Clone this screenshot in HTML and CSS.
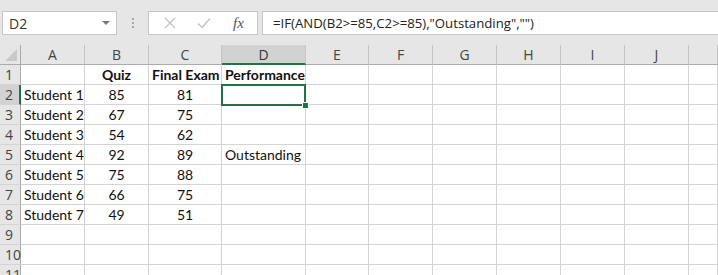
FILE: index.html
```html
<!DOCTYPE html>
<html lang="en">
<head>
    <meta charset="UTF-8">
    <title>Performance</title>
    <link rel="stylesheet" href="styles.css">
</head>
<body>
    <div class="topbar">
        <div class="namebox">
            <span>D2</span>
            <svg class="arrow" width="8" height="5" viewBox="0 0 8 5"><path d="M0 0 L8 0 L4 4 Z" fill="#7a7a7a"/></svg>
        </div>
        <div class="grip"><i></i><i></i><i></i></div>
        <div class="fbuttons">
            <svg width="12" height="12" viewBox="0 0 12 12"><path d="M1 1 L11 11 M11 1 L1 11" stroke="#c4c4c4" stroke-width="1.4" fill="none"/></svg>
            <svg width="14" height="12" viewBox="0 0 14 12"><path d="M1 6.5 L5 10.5 L13 1.5" stroke="#c4c4c4" stroke-width="1.5" fill="none"/></svg>
            <span class="fx">fx</span>
        </div>
        <div class="formula">=IF(AND(B2&gt;=85,C2&gt;=85),"Outstanding","")</div>
    </div>

    <div class="sheet" id="sheet">
        <div class="selection"><span class="handle"></span></div>
    </div>

    <script>
        const sheet = document.getElementById('sheet');
        const cols = ['A', 'B', 'C', 'D', 'E', 'F', 'G', 'H', 'I', 'J', ''];
        const rows = [
            ['', 'Quiz', 'Final Exam', 'Performance'],
            ['Student 1', '85', '81', ''],
            ['Student 2', '67', '75', ''],
            ['Student 3', '54', '62', ''],
            ['Student 4', '92', '89', 'Outstanding'],
            ['Student 5', '75', '88', ''],
            ['Student 6', '66', '75', ''],
            ['Student 7', '49', '51', ''],
            [], [], []
        ];

        function cell(cls, text) {
            const el = document.createElement('div');
            el.className = cls;
            el.textContent = text || '';
            sheet.appendChild(el);
        }

        cell('corner');
        cols.forEach((c) => cell(c === 'D' ? 'colhead active' : 'colhead', c));

        rows.forEach((row, r) => {
            cell(r === 1 ? 'rowhead active' : 'rowhead', r + 1);
            cols.forEach((c, i) => {
                let cls = 'cell';
                if (i === 1 || i === 2) cls += ' center';
                if (r === 0) cls += ' bold';
                cell(cls, row[i]);
            });
        });
    </script>
</body>
</html>
```

FILE: styles.css
```css
body {
    margin: 0;
    width: 718px;
    height: 275px;
    overflow: hidden;
    background: #fff;
    font-family: Lato, "Open Sans", sans-serif;
}

/* Formula bar */
.topbar {
    display: flex;
    align-items: flex-start;
    height: 45px;
    padding: 11px 0 0 2px;
    box-sizing: border-box;
    background: #e6e6e6;
}

.namebox {
    width: 115px;
    height: 24px;
    box-sizing: border-box;
    background: #fff;
    border: 1px solid #c6c6c6;
    display: flex;
    align-items: center;
    justify-content: space-between;
    padding: 0 6px;
    font-family: "Open Sans", sans-serif;
    font-size: 14px;
    color: #333;
}

.namebox .arrow {
    margin-top: 1px;
}

.grip {
    width: 31px;
    height: 24px;
    display: flex;
    flex-direction: column;
    align-items: center;
    justify-content: center;
    gap: 2px;
}

.grip i {
    width: 2px;
    height: 2px;
    background: #a8a8a8;
}

.fbuttons {
    width: 110px;
    height: 24px;
    box-sizing: border-box;
    background: #fff;
    border: 1px solid #c6c6c6;
    display: flex;
    align-items: center;
    padding-left: 15px;
    gap: 21px;
}

.fx {
    font-family: "Liberation Serif", serif;
    font-style: italic;
    font-size: 15px;
    color: #555;
    margin-left: 1px;
}

.formula {
    flex: 1;
    height: 24px;
    margin-left: 4px;
    box-sizing: border-box;
    background: #fff;
    border: 1px solid #c6c6c6;
    border-right: none;
    padding: 2px 0 0 10px;
    font-family: "Open Sans", sans-serif;
    font-size: 13.2px;
    color: #222;
}

/* Grid */
.sheet {
    position: relative;
    display: grid;
    grid-template-columns: 21px 64px 64px 73px 84px 63px 64px 64px 64px 64px 64px 1fr;
    grid-auto-rows: 20px;
    background: #e6e6e6;
}

.corner {
    background: #e6e6e6;
    border-right: 1px solid #ababab;
    border-bottom: 1px solid #ababab;
    position: relative;
}

.corner::after {
    content: "";
    position: absolute;
    right: 3px;
    bottom: 3px;
    border-left: 12px solid transparent;
    border-bottom: 12px solid #c9c9c9;
}

.colhead {
    background: #e6e6e6;
    border-right: 1px solid #c4c4c4;
    border-bottom: 1px solid #ababab;
    text-align: center;
    font-size: 14px;
    line-height: 20px;
    color: #444;
    font-family: "Open Sans", sans-serif;
}

.colhead.active {
    background: #d2d2d2;
    border-bottom: 2px solid #217346;
    color: #333;
}

.rowhead {
    background: #e6e6e6;
    border-right: 1px solid #ababab;
    border-bottom: 1px solid #d4d4d4;
    padding-left: 5px;
    font-size: 14px;
    line-height: 20px;
    color: #444;
    font-family: "Open Sans", sans-serif;
}

.rowhead.active {
    background: #d2d2d2;
    border-right: 2px solid #217346;
}

.cell {
    background: #fff;
    border-right: 1px solid #d4d4d4;
    border-bottom: 1px solid #d4d4d4;
    padding: 0 3px;
    font-size: 14px;
    line-height: 20px;
    color: #111;
    white-space: nowrap;
}

.center {
    text-align: center;
}

.bold {
    font-weight: bold;
}

/* Active cell D2 */
.selection {
    position: absolute;
    left: 221px;
    top: 39px;
    width: 85px;
    height: 22px;
    box-sizing: border-box;
    border: 2px solid #217346;
}

.handle {
    position: absolute;
    right: -5px;
    bottom: -5px;
    width: 5px;
    height: 5px;
    background: #217346;
    border: 1px solid #fff;
}
```
